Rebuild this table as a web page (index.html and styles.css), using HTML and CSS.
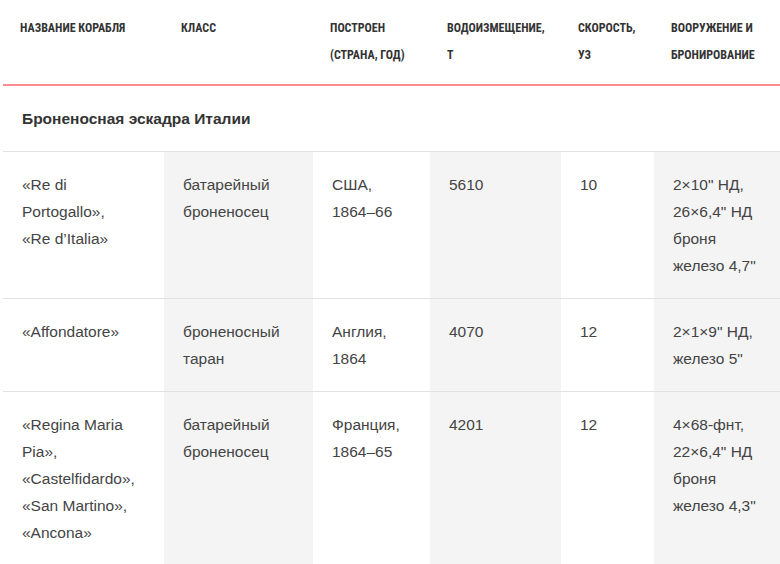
FILE: index.html
```html
<!DOCTYPE html>
<html lang="ru">
<head>
<meta charset="utf-8">
<title>Броненосная эскадра Италии</title>
<link rel="stylesheet" href="styles.css">
</head>
<body>
<table class="ships">
  <colgroup>
    <col class="c1"><col class="c2"><col class="c3"><col class="c4"><col class="c5"><col class="c6">
  </colgroup>
  <thead>
    <tr>
      <th>Название корабля</th>
      <th>Класс</th>
      <th>Построен<br>(страна, год)</th>
      <th>Водоизмещение,<br>т</th>
      <th>Скорость,<br>уз</th>
      <th>Вооружение и<br>бронирование</th>
    </tr>
  </thead>
  <tbody>
    <tr class="section">
      <td colspan="6">Броненосная эскадра Италии</td>
    </tr>
    <tr>
      <td>«Re di<br>Portogallo»,<br>«Re d’Italia»</td>
      <td>батарейный<br>броненосец</td>
      <td>США,<br>1864–66</td>
      <td>5610</td>
      <td>10</td>
      <td>2×10" НД,<br>26×6,4" НД<br>броня<br>железо 4,7"</td>
    </tr>
    <tr>
      <td>«Affondatore»</td>
      <td>броненосный<br>таран</td>
      <td>Англия,<br>1864</td>
      <td>4070</td>
      <td>12</td>
      <td>2×1×9" НД,<br>железо 5"</td>
    </tr>
    <tr>
      <td>«Regina Maria<br>Pia»,<br>«Castelfidardo»,<br>«San Martino»,<br>«Ancona»</td>
      <td>батарейный<br>броненосец</td>
      <td>Франция,<br>1864–65</td>
      <td>4201</td>
      <td>12</td>
      <td>4×68-фнт,<br>22×6,4" НД<br>броня<br>железо 4,3"</td>
    </tr>
  </tbody>
</table>
</body>
</html>
```
FILE: styles.css
```css
html, body {
  margin: 0;
  padding: 0;
  background: #fff;
  overflow: hidden;
}

.ships {
  margin-left: 3px;
  width: 790px;
  border-collapse: collapse;
  table-layout: fixed;
  font-family: "Liberation Sans", Arial, sans-serif;
  color: #444;
}

.c1 { width: 161px; }
.c2 { width: 149px; }
.c3 { width: 117px; }
.c4 { width: 131px; }
.c5 { width: 93px; }
.c6 { width: 139px; }

.ships th {
  font-family: "Liberation Sans Narrow", "Roboto Condensed", "Liberation Sans", sans-serif;
  font-stretch: condensed;
  font-weight: bold;
  font-size: 12px;
  line-height: 27px;
  text-transform: uppercase;
  text-align: left;
  vertical-align: top;
  color: #333;
  padding: 15px 19px 15px 17px;
  border-bottom: 2px solid #ff8d8d;
}

.ships td {
  font-size: 15.5px;
  line-height: 27px;
  vertical-align: top;
  padding: 19px 19px;
  border-bottom: 1px solid #e2e2e2;
}

.ships tbody tr:not(.section) td:nth-child(2n) {
  background: #f4f4f4;
}

.ships .section td {
  font-weight: bold;
  color: #333;
}
```
